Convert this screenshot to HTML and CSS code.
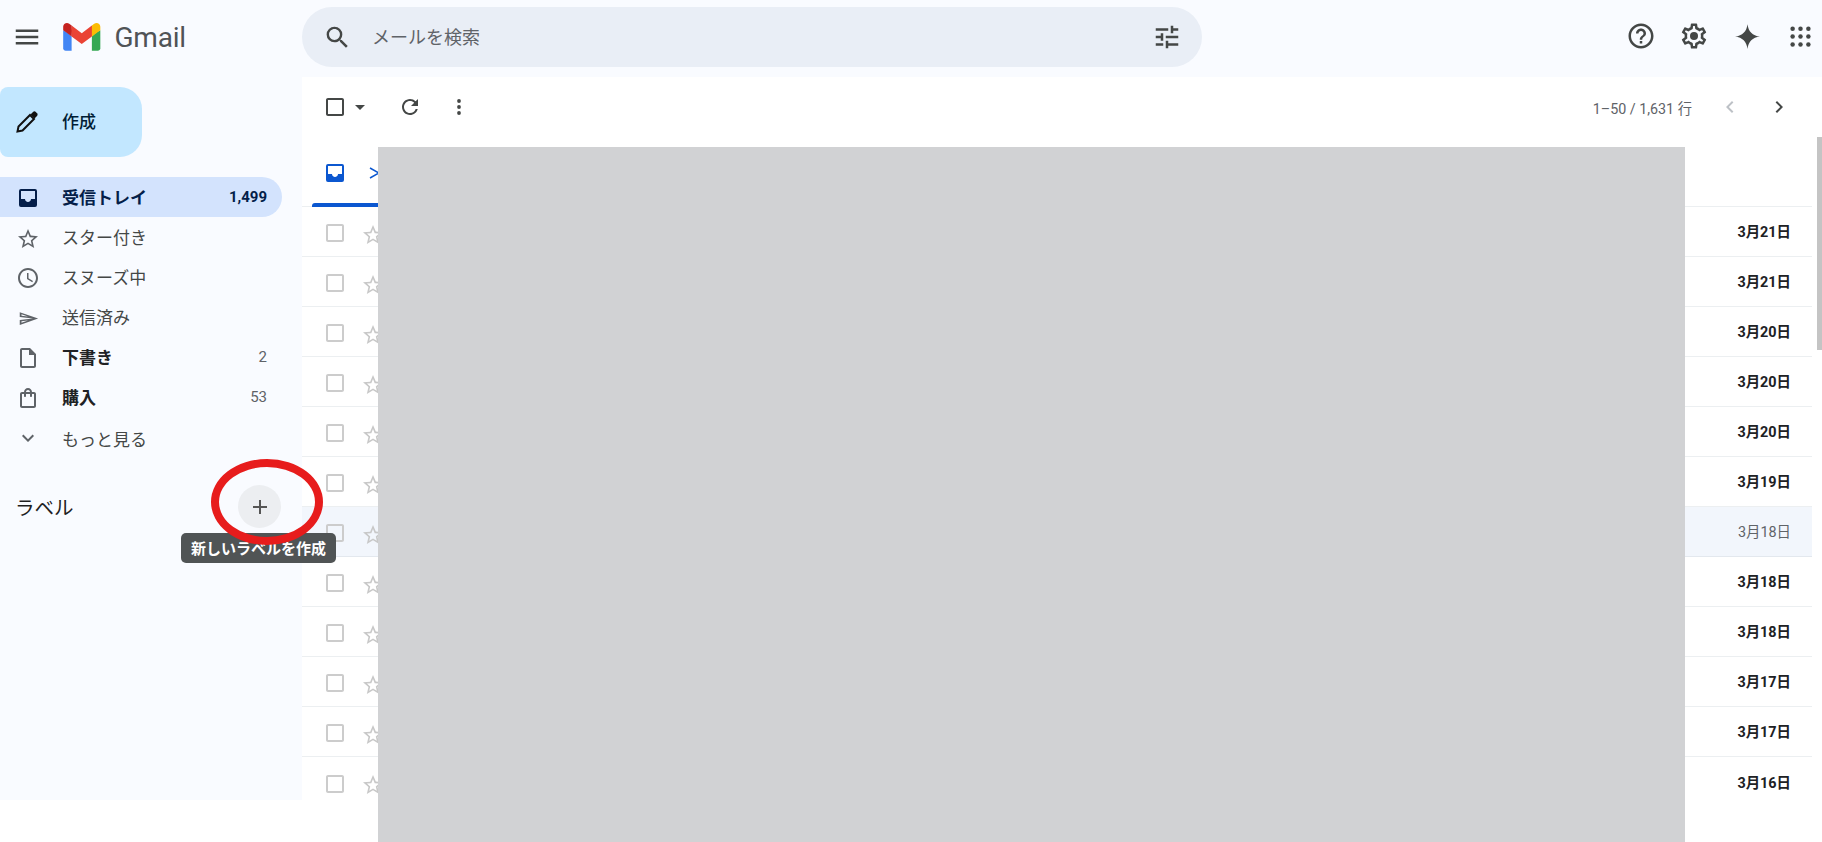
FILE: index.html
```html
<!DOCTYPE html>
<html lang="ja">
<head>
  <meta charset="UTF-8" />
  <meta name="viewport" content="width=device-width, initial-scale=1.0" />
  <title>Gmail</title>
  <link rel="stylesheet" href="styles.css">
</head>
<body>
  <svg class="defs" width="0" height="0">
    <symbol id="i-check" viewBox="0 0 24 24"><path d="M19 5v14H5V5h14m0-2H5c-1.1 0-2 .9-2 2v14c0 1.1.9 2 2 2h14c1.1 0 2-.9 2-2V5c0-1.1-.9-2-2-2z"/></symbol>
    <symbol id="i-star" viewBox="0 0 24 24"><path d="M22 9.24l-7.19-.62L12 2 9.19 8.63 2 9.24l5.46 4.73L5.82 21 12 17.27 18.18 21l-1.63-7.03L22 9.24zM12 15.4l-3.76 2.27 1-4.28-3.32-2.88 4.38-.38L12 6.1l1.71 4.04 4.38.38-3.32 2.88 1 4.28L12 15.4z"/></symbol>
    <symbol id="i-inbox" viewBox="0 0 24 24"><path d="M19 3H5a2 2 0 0 0-2 2v14a2 2 0 0 0 2 2h14a2 2 0 0 0 2-2V5a2 2 0 0 0-2-2zm0 2v8h-4c0 1.66-1.34 3-3 3s-3-1.34-3-3H5V5h14z"/></symbol>
  </svg>

  <header class="topbar">
    <div class="brand">
      <svg class="icon menu-icon" viewBox="0 0 24 24"><path d="M3 18h18v-2H3v2zm0-5h18v-2H3v2zm0-7v2h18V6H3z"/></svg>
      <svg class="logo" viewBox="0 0 256 193">
        <path fill="#4285F4" d="M58.182 192.05V93.14L27.507 65.077 0 49.504v125.091c0 9.658 7.825 17.455 17.455 17.455h40.727Z"/>
        <path fill="#34A853" d="M197.818 192.05h40.727c9.659 0 17.455-7.826 17.455-17.455V49.505l-31.156 17.837-27.026 25.798v98.91Z"/>
        <path fill="#EA4335" d="m58.182 93.14-4.174-38.647 4.174-36.989L128 69.868l69.818-52.364 4.669 34.992-4.669 40.644L128 145.504z"/>
        <path fill="#FBBC04" d="M197.818 17.504V93.14L256 49.504V26.231c0-21.585-24.64-33.89-41.89-20.945l-16.292 12.218Z"/>
        <path fill="#C5221F" d="m0 49.504 26.759 20.07L58.182 93.14V17.504L41.89 5.286C24.61-7.66 0 4.646 0 26.23v23.273Z"/>
      </svg>
      <span class="wordmark">Gmail</span>
    </div>
    <div class="search">
      <svg class="icon search-icon" viewBox="0 0 24 24"><path d="M15.5 14h-.79l-.28-.27A6.471 6.471 0 0 0 16 9.5 6.5 6.5 0 1 0 9.5 16c1.61 0 3.09-.59 4.23-1.57l.27.28v.79l5 4.99L20.49 19l-4.99-5zm-6 0C7.01 14 5 11.99 5 9.5S7.01 5 9.5 5 14 7.01 14 9.5 11.99 14 9.5 14z"/></svg>
      <span class="search-text">メールを検索</span>
      <svg class="icon tune-icon" viewBox="0 0 24 24"><path d="M3 17v2h6v-2H3zM3 5v2h10V5H3zm10 16v-2h8v-2h-8v-2h-2v6h2zM7 9v2H3v2h4v2h2V9H7zm14 4v-2H11v2h10zm-6-4h2V7h4V5h-4V3h-2v6z"/></svg>
    </div>
    <div class="top-actions">
      <svg class="icon" viewBox="0 0 24 24"><path d="M11 18h2v-2h-2v2zm1-16C6.48 2 2 6.48 2 12s4.48 10 10 10 10-4.48 10-10S17.52 2 12 2zm0 18c-4.41 0-8-3.59-8-8s3.59-8 8-8 8 3.59 8 8-3.59 8-8 8zm0-14c-2.21 0-4 1.79-4 4h2c0-1.1.9-2 2-2s2 .9 2 2c0 2-3 1.75-3 5h2c0-2.25 3-2.5 3-5 0-2.21-1.79-4-4-4z"/></svg>
      <svg class="icon" viewBox="0 0 24 24"><path d="M19.43 12.98c.04-.32.07-.64.07-.98 0-.34-.03-.66-.07-.98l2.11-1.65c.19-.15.24-.42.12-.64l-2-3.46c-.09-.16-.26-.25-.44-.25-.06 0-.12.01-.17.03l-2.49 1c-.52-.4-1.08-.73-1.69-.98l-.38-2.65C14.46 2.18 14.25 2 14 2h-4c-.25 0-.46.18-.49.42l-.38 2.65c-.61.25-1.17.59-1.69.98l-2.49-1c-.06-.02-.12-.03-.18-.03-.17 0-.34.09-.43.25l-2 3.46c-.13.22-.07.49.12.64l2.11 1.65c-.04.32-.07.65-.07.98 0 .33.03.66.07.98l-2.11 1.65c-.19.15-.24.42-.12.64l2 3.46c.09.16.26.25.44.25.06 0 .12-.01.17-.03l2.49-1c.52.4 1.08.73 1.69.98l.38 2.65c.03.24.24.42.49.42h4c.25 0 .46-.18.49-.42l.38-2.65c.61-.25 1.17-.59 1.69-.98l2.49 1c.06.02.12.03.18.03.17 0 .34-.09.43-.25l2-3.46c.12-.22.07-.49-.12-.64l-2.11-1.65zm-1.98-1.71c.04.31.05.52.05.73 0 .21-.02.43-.05.73l-.14 1.13.89.7 1.08.84-.7 1.21-1.27-.51-1.04-.42-.9.68c-.43.32-.84.56-1.25.73l-1.06.43-.16 1.13-.2 1.35h-1.4l-.19-1.35-.16-1.13-1.06-.43c-.43-.18-.83-.41-1.23-.71l-.91-.7-1.06.43-1.27.51-.7-1.21 1.08-.84.89-.7-.14-1.13c-.03-.31-.05-.54-.05-.74s.02-.43.05-.73l.14-1.13-.89-.7-1.08-.84.7-1.21 1.27.51 1.04.42.9-.68c.43-.32.84-.56 1.25-.73l1.06-.43.16-1.13.2-1.35h1.39l.19 1.35.16 1.13 1.06.43c.43.18.83.41 1.23.71l.91.7 1.06-.43 1.27-.51.7 1.21-1.07.85-.89.7.14 1.13z"/><circle cx="12" cy="12" r="3.2"/></svg>
      <svg class="icon small" viewBox="0 0 24 24"><path d="M12 1C12.8 7.5 16.5 11.2 23 12 16.5 12.8 12.8 16.5 12 23 11.2 16.5 7.5 12.8 1 12 7.5 11.2 11.2 7.5 12 1z"/></svg>
      <svg class="icon small" viewBox="0 0 24 24"><circle cx="5" cy="5" r="2"/><circle cx="12" cy="5" r="2"/><circle cx="19" cy="5" r="2"/><circle cx="5" cy="12" r="2"/><circle cx="12" cy="12" r="2"/><circle cx="19" cy="12" r="2"/><circle cx="5" cy="19" r="2"/><circle cx="12" cy="19" r="2"/><circle cx="19" cy="19" r="2"/></svg>
    </div>
  </header>

  <div class="content">
    <aside class="sidebar">
      <button class="compose">
        <svg class="icon compose-icon" viewBox="0 0 24 24">
          <path d="M15 5l4 4L7.5 20.5 2.5 21.5l1-5z" fill="none" stroke="#111" stroke-width="2"/>
          <path d="M15.5 4.5 18 2a2 2 0 0 1 2.8 0l1.2 1.2a2 2 0 0 1 0 2.8l-2.5 2.5z"/>
        </svg>
        <span>作成</span>
      </button>

      <nav class="nav">
        <div class="nav-item active">
          <svg class="icon"><use href="#i-inbox"/></svg>
          <span class="nav-label">受信トレイ</span>
          <span class="nav-count">1,499</span>
        </div>
        <div class="nav-item">
          <svg class="icon nav-star"><use href="#i-star"/></svg>
          <span class="nav-label">スター付き</span>
        </div>
        <div class="nav-item">
          <svg class="icon" viewBox="0 0 24 24"><path d="M11.99 2C6.47 2 2 6.48 2 12s4.47 10 9.99 10C17.52 22 22 17.52 22 12S17.52 2 11.99 2zM12 20c-4.42 0-8-3.58-8-8s3.58-8 8-8 8 3.58 8 8-3.58 8-8 8zm.5-13H11v6l5.25 3.15.75-1.23-4.5-2.67V7z"/></svg>
          <span class="nav-label">スヌーズ中</span>
        </div>
        <div class="nav-item">
          <span class="send-wrap">
            <svg class="send-icon" viewBox="0 0 24 24" preserveAspectRatio="none"><path d="M4.01 6.03l7.51 3.22-7.52-1 .01-2.22m7.5 8.72L4 17.97v-2.22l7.51-1M2.01 3L2 10l15 2-15 2 .01 7L23 12 2.01 3z"/></svg>
          </span>
          <span class="nav-label">送信済み</span>
        </div>
        <div class="nav-item strong">
          <svg class="icon" viewBox="0 0 24 24"><path d="M14 2H6c-1.1 0-2 .9-2 2v16c0 1.1.9 2 2 2h12c1.1 0 2-.9 2-2V8l-6-6zM6 20V4h7v5h5v11H6z"/></svg>
          <span class="nav-label">下書き</span>
          <span class="nav-count">2</span>
        </div>
        <div class="nav-item strong">
          <svg class="icon" viewBox="0 0 24 24"><path d="M18 6h-2c0-2.21-1.79-4-4-4S8 3.79 8 6H6c-1.1 0-2 .9-2 2v12c0 1.1.9 2 2 2h12c1.1 0 2-.9 2-2V8c0-1.1-.9-2-2-2zm-6-2c1.1 0 2 .9 2 2h-4c0-1.1.9-2 2-2zm6 16H6V8h2v2c0 .55.45 1 1 1s1-.45 1-1V8h4v2c0 .55.45 1 1 1s1-.45 1-1V8h2v12z"/></svg>
          <span class="nav-label">購入</span>
          <span class="nav-count">53</span>
        </div>
        <div class="nav-item more">
          <svg class="icon" viewBox="0 0 24 24"><path d="M16.59 8.59L12 13.17 7.41 8.59 6 10l6 6 6-6z"/></svg>
          <span class="nav-label">もっと見る</span>
        </div>
      </nav>

      <div class="labels">
        <span class="labels-title">ラベル</span>
        <span class="labels-add">
          <svg viewBox="0 0 24 24"><path d="M19 13h-6v6h-2v-6H5v-2h6V5h2v6h6v2z"/></svg>
        </span>
      </div>
    </aside>

    <main class="main">
      <div class="toolbar">
        <svg class="icon tool-check"><use href="#i-check"/></svg>
        <span class="caret"></span>
        <svg class="icon tool-refresh" viewBox="0 0 24 24"><path d="M17.65 6.35A7.958 7.958 0 0 0 12 4c-4.42 0-7.99 3.58-7.99 8s3.57 8 7.99 8c3.73 0 6.84-2.55 7.73-6h-2.08A5.99 5.99 0 0 1 12 18c-3.31 0-6-2.69-6-6s2.69-6 6-6c1.66 0 3.14.69 4.22 1.78L13 11h7V4l-2.35 2.35z"/></svg>
        <svg class="icon tool-more" viewBox="0 0 24 24"><circle cx="12" cy="6" r="1.9"/><circle cx="12" cy="12" r="1.9"/><circle cx="12" cy="18" r="1.9"/></svg>
        <span class="pager-text">1–50 / 1,631 行</span>
        <svg class="icon pager-prev" viewBox="0 0 24 24"><path d="M15.41 7.41L14 6l-6 6 6 6 1.41-1.41L10.83 12z"/></svg>
        <svg class="icon pager-next" viewBox="0 0 24 24"><path d="M8.59 16.59L10 18l6-6-6-6-1.41 1.41L13.17 12z"/></svg>
      </div>

      <div class="tabs">
        <div class="tab">
          <svg class="icon tab-icon"><use href="#i-inbox"/></svg>
          <svg class="tab-cut" viewBox="0 0 10 12"><path d="M1 1l9 5-9 5" fill="none" stroke="#0b57d0" stroke-width="1.5"/></svg>
        </div>
      </div>

      <div class="list">
        <div class="row"><svg class="icon box"><use href="#i-check"/></svg><svg class="icon star"><use href="#i-star"/></svg><span class="date">3月21日</span></div>
        <div class="row"><svg class="icon box"><use href="#i-check"/></svg><svg class="icon star"><use href="#i-star"/></svg><span class="date">3月21日</span></div>
        <div class="row"><svg class="icon box"><use href="#i-check"/></svg><svg class="icon star"><use href="#i-star"/></svg><span class="date">3月20日</span></div>
        <div class="row"><svg class="icon box"><use href="#i-check"/></svg><svg class="icon star"><use href="#i-star"/></svg><span class="date">3月20日</span></div>
        <div class="row"><svg class="icon box"><use href="#i-check"/></svg><svg class="icon star"><use href="#i-star"/></svg><span class="date">3月20日</span></div>
        <div class="row"><svg class="icon box"><use href="#i-check"/></svg><svg class="icon star"><use href="#i-star"/></svg><span class="date">3月19日</span></div>
        <div class="row read"><svg class="icon box"><use href="#i-check"/></svg><svg class="icon star"><use href="#i-star"/></svg><span class="date">3月18日</span></div>
        <div class="row"><svg class="icon box"><use href="#i-check"/></svg><svg class="icon star"><use href="#i-star"/></svg><span class="date">3月18日</span></div>
        <div class="row"><svg class="icon box"><use href="#i-check"/></svg><svg class="icon star"><use href="#i-star"/></svg><span class="date">3月18日</span></div>
        <div class="row"><svg class="icon box"><use href="#i-check"/></svg><svg class="icon star"><use href="#i-star"/></svg><span class="date">3月17日</span></div>
        <div class="row"><svg class="icon box"><use href="#i-check"/></svg><svg class="icon star"><use href="#i-star"/></svg><span class="date">3月17日</span></div>
        <div class="row last"><svg class="icon box"><use href="#i-check"/></svg><svg class="icon star"><use href="#i-star"/></svg><span class="date">3月16日</span></div>
      </div>

      <div class="redaction"></div>
      <div class="scroll-thumb"></div>
    </main>
  </div>

  <div class="tooltip">新しいラベルを作成</div>
  <div class="red-ring"></div>
</body>
</html>
```

FILE: styles.css
```css
* {
  box-sizing: border-box;
}
html, body {
  height: 100%;
}
body {
  margin: 0;
  height: 842px;
  overflow: hidden;
  position: relative;
  background: #fff;
  color: #202124;
  font-family: Roboto, "Noto Sans CJK JP", sans-serif;
}
.defs {
  position: absolute;
}
.icon {
  width: 24px;
  height: 24px;
  flex: none;
  fill: #444746;
}

/* top bar */
.topbar {
  height: 77px;
  padding-bottom: 3px;
  display: flex;
  align-items: center;
  background: #f9fbff;
}
.brand {
  width: 302px;
  flex: none;
  display: flex;
  align-items: center;
  padding-left: 12px;
}
.menu-icon {
  width: 30px;
  height: 30px;
}
.logo {
  width: 37.5px;
  height: 28px;
  margin-left: 21px;
}
.wordmark {
  margin-left: 14px;
  font-size: 28px;
  color: #505356;
  letter-spacing: -0.2px;
}
.search {
  width: 900px;
  height: 60px;
  padding: 0 20px 0 21px;
  display: flex;
  align-items: center;
  border-radius: 30px;
  background: #e9eef6;
}
.search-icon {
  width: 29px;
  height: 29px;
}
.search-text {
  flex: 1;
  margin-left: 20px;
  margin-top: -2px;
  font-size: 18px;
  color: #5f6368;
}
.tune-icon {
  width: 30px;
  height: 30px;
}
.top-actions {
  flex: 1;
  display: flex;
  align-items: center;
  justify-content: flex-end;
  gap: 23px;
  padding-right: 7px;
  margin-top: -2px;
}
.top-actions .icon {
  width: 30px;
  height: 30px;
}
.top-actions .small {
  width: 27px;
  height: 27px;
  margin: 0 1.5px;
}

/* layout */
.content {
  display: flex;
  height: 765px;
}
.sidebar {
  width: 302px;
  height: 723px;
  flex: none;
  background: #f9fbff;
  padding-top: 10px;
}
.compose {
  width: 142px;
  height: 70px;
  padding: 0 0 0 15px;
  display: flex;
  align-items: center;
  border: 0;
  border-radius: 8px 22px 22px 8px;
  background: #c2e7ff;
  font: 500 17px Roboto, "Noto Sans CJK JP", sans-serif;
  color: #001d35;
}
.compose-icon {
  fill: #111;
}
.compose span {
  margin-left: 23px;
  margin-top: -4px;
}

/* nav */
.nav {
  margin-top: 20px;
  width: 282px;
}
.nav-item {
  height: 40px;
  display: flex;
  align-items: center;
  padding: 0 15px 0 16px;
  font-size: 17px;
  color: #444746;
}
.nav-item .icon {
  margin-top: 2px;
  fill: #5f6368;
}
.nav-item .nav-star {
  margin-top: 4px;
}
.send-wrap {
  width: 24px;
  height: 24px;
  flex: none;
  margin-top: 2px;
  display: flex;
  align-items: center;
  justify-content: center;
}
.send-icon {
  width: 21px;
  height: 17px;
  fill: #5f6368;
}
.nav-label {
  flex: 1;
  margin-left: 22px;
  margin-top: -2px;
}
.nav-item.more .nav-label {
  margin-top: 2px;
}
.nav-count {
  font-size: 15px;
  color: #5f6368;
}
.nav-item.active {
  border-radius: 0 20px 20px 0;
  background: #d3e3fd;
  color: #041e49;
  font-weight: 700;
}
.nav-item.active .icon {
  fill: #041e49;
}
.nav-item.active .nav-count {
  color: #041e49;
  font-weight: 700;
}
.nav-item.strong .nav-label {
  color: #202124;
  font-weight: 700;
}

/* labels */
.labels {
  margin-top: 28px;
  width: 281px;
  padding-left: 15px;
  display: flex;
  align-items: center;
  justify-content: space-between;
}
.labels-title {
  font-size: 19.5px;
  color: #1f1f1f;
}
.labels-add {
  width: 43px;
  height: 43px;
  display: flex;
  align-items: center;
  justify-content: center;
  border-radius: 50%;
  background: #eceef1;
}
.labels-add svg {
  width: 24px;
  height: 24px;
  fill: #555;
}

/* main panel */
.main {
  flex: 1;
  position: relative;
  background: #fff;
  border-radius: 20px 20px 0 0;
  padding-right: 10px;
  overflow: hidden;
}
.toolbar {
  height: 60px;
  display: flex;
  align-items: center;
  padding-left: 21px;
}
.caret {
  width: 0;
  height: 0;
  margin-left: 8px;
  border-left: 5px solid transparent;
  border-right: 5px solid transparent;
  border-top: 5px solid #444746;
}
.tool-refresh {
  margin-left: 33px;
}
.tool-more {
  margin-left: 25px;
}
.pager-text {
  margin-left: auto;
  font-size: 14.3px;
  color: #5f6368;
}
.pager-prev {
  margin-left: 26px;
  fill: #bdc1c6;
}
.pager-next {
  margin-left: 25px;
  margin-right: 21px;
}
.tabs {
  height: 70px;
  border-bottom: 1px solid #eceff1;
  padding-left: 10px;
}
.tab {
  position: relative;
  width: 200px;
  height: 70px;
  display: flex;
  align-items: center;
  padding-left: 11px;
}
.tab::after {
  content: "";
  position: absolute;
  left: 0;
  right: 0;
  bottom: 0;
  height: 4px;
  border-radius: 3px 3px 0 0;
  background: #0b57d0;
}
.tab-icon {
  margin-top: 1px;
  fill: #0b57d0;
}
.tab-cut {
  width: 10px;
  height: 12px;
  margin-left: 22px;
  margin-top: 1px;
}
.row {
  height: 50px;
  display: flex;
  align-items: center;
  padding: 0 21px;
  border-bottom: 1px solid #eceff1;
}
.row.last {
  border-bottom: 0;
}
.row.read {
  background: #f2f6fc;
  border-bottom-color: #e3e8ee;
}
.box {
  margin-top: 3px;
  fill: #cccccc;
}
.star {
  margin-left: 14px;
  margin-top: 6px;
  fill: #c8c8c8;
}
.date {
  margin-left: auto;
  margin-top: -2px;
  font-size: 14.4px;
  font-weight: 700;
  color: #202124;
}
.read .date {
  font-weight: 400;
  color: #5f6368;
}
.redaction {
  position: absolute;
  left: 76px;
  top: 70px;
  bottom: 0;
  width: 1307px;
  background: #d1d2d4;
}
.scroll-thumb {
  position: absolute;
  right: 0;
  top: 60px;
  width: 5px;
  height: 213px;
  background: #c4c4c4;
}

/* overlays */
.tooltip {
  position: absolute;
  left: 181px;
  top: 533px;
  width: 155px;
  height: 30px;
  padding-bottom: 2px;
  display: flex;
  align-items: center;
  justify-content: center;
  border-radius: 5px;
  background: #505455;
  color: #fff;
  font-size: 15px;
  font-weight: 700;
}
.red-ring {
  position: absolute;
  left: 211px;
  top: 459px;
  width: 112px;
  height: 86px;
  border: 8px solid #e71c1c;
  border-radius: 50%;
}
```
